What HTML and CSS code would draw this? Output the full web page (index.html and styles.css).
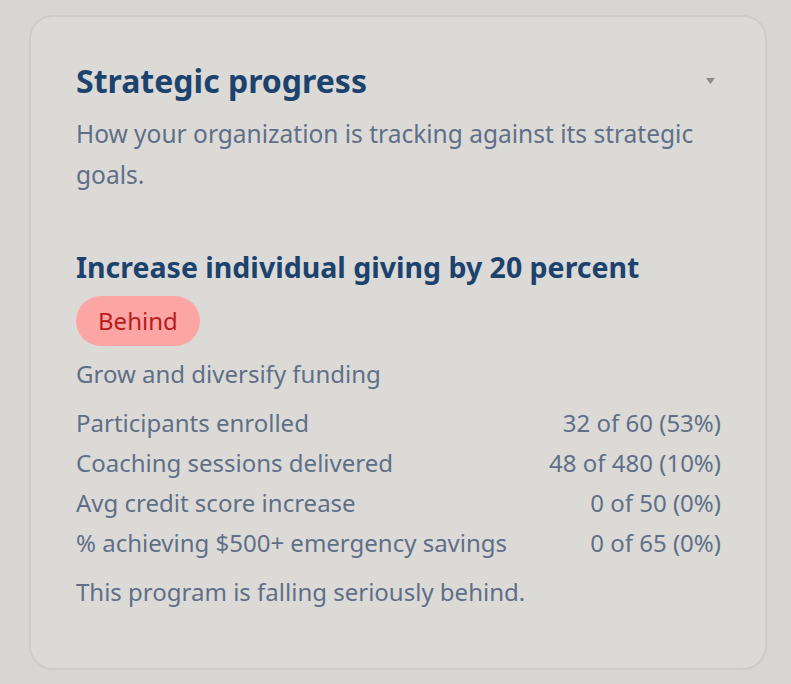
FILE: index.html
```html
<!DOCTYPE html>
<html lang="en">
<head>
<meta charset="utf-8">
<title>Strategic progress</title>
<link rel="stylesheet" href="styles.css">
</head>
<body>
<section class="card">
  <div class="card-head">
    <h2 class="card-title">Strategic progress</h2>
    <button class="toggle" aria-label="Collapse">
      <svg width="9" height="6" viewBox="0 0 9 6"><path d="M0 0H9L4.5 6Z" fill="currentColor"/></svg>
    </button>
  </div>
  <p class="card-sub">How your organization is tracking against its strategic goals.</p>

  <div class="goal">
    <h3 class="goal-title">Increase individual giving by 20 percent</h3>
    <span class="badge badge-behind">Behind</span>
    <p class="goal-theme">Grow and diversify funding</p>
    <ul class="metrics">
      <li class="metric"><span>Participants enrolled</span><span>32 of 60 (53%)</span></li>
      <li class="metric"><span>Coaching sessions delivered</span><span>48 of 480 (10%)</span></li>
      <li class="metric"><span>Avg credit score increase</span><span>0 of 50 (0%)</span></li>
      <li class="metric"><span>% achieving $500+ emergency savings</span><span>0 of 65 (0%)</span></li>
    </ul>
    <p class="goal-note">This program is falling seriously behind.</p>
  </div>
</section>
</body>
</html>
```

FILE: styles.css
```css
html, body {
  margin: 0;
  background: #d8d5d2;
}
body {
  padding: 15px 24px 16px 29px;
  font-family: "Noto Sans", "Open Sans", sans-serif;
  color: #5f6f87;
}
.card {
  background: #dcdad7;
  border: 2px solid #cfcbc7;
  border-radius: 24px;
  padding: 42px 44px 56px 45px;
}
.card-head {
  display: flex;
  justify-content: space-between;
  align-items: center;
}
.card-title {
  margin: 0;
  font-size: 32px;
  line-height: 44px;
  font-weight: 700;
  color: #1c426e;
}
.toggle {
  border: 0;
  background: none;
  padding: 0 6px 0 0;
  color: #8e8a85;
  display: flex;
}
.card-sub {
  margin: 10px 0 0;
  font-size: 24.5px;
  line-height: 41px;
}
.goal {
  margin-top: 54px;
}
.goal-title {
  margin: 0;
  font-size: 28.5px;
  line-height: 36px;
  font-weight: 700;
  color: #1c426e;
}
.badge {
  display: block;
  width: max-content;
  margin-top: 11px;
  padding: 0 22px;
  height: 50px;
  line-height: 50px;
  border-radius: 25px;
  font-size: 24px;
}
.badge-behind {
  background: #fca5a5;
  color: #b91c1c;
}
.goal-theme {
  margin: 8px 0 0;
  font-size: 24px;
  line-height: 40px;
}
.metrics {
  list-style: none;
  margin: 9px 0 0;
  padding: 0;
}
.metric {
  display: flex;
  justify-content: space-between;
  font-size: 24px;
  line-height: 40px;
}
.goal-note {
  margin: 9px 0 0;
  font-size: 24px;
  line-height: 40px;
}
```
